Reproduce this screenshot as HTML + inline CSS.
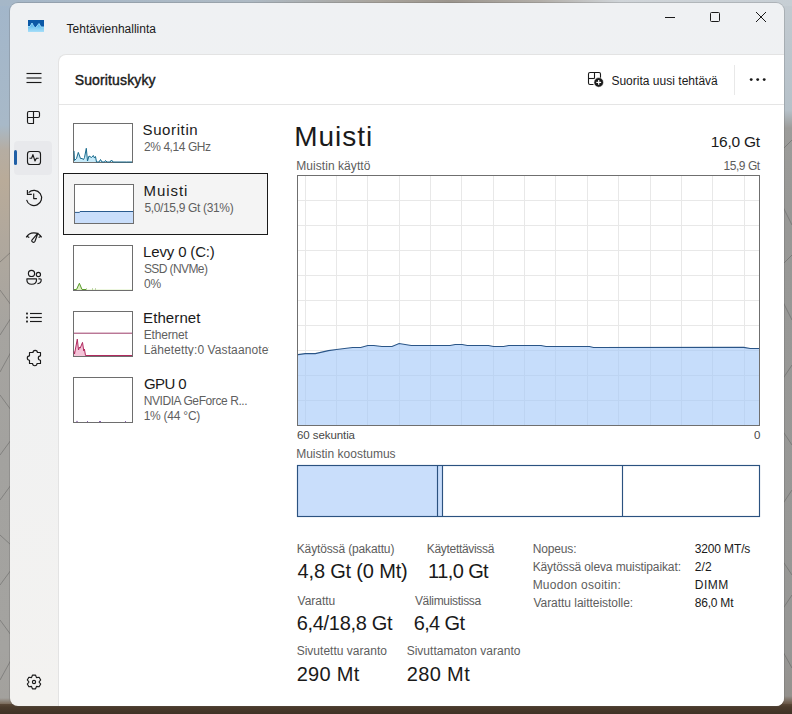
<!DOCTYPE html>
<html><head><meta charset="utf-8">
<style>
*{margin:0;padding:0;box-sizing:border-box}
html,body{width:792px;height:714px;overflow:hidden}
body{position:relative;font-family:"Liberation Sans",sans-serif;color:#1a1a1a;background-color:#9a9a98}
#bgL{position:absolute;left:0;top:0;width:12px;height:714px;background:linear-gradient(180deg,#a2b6ca 0px,#a8b9c8 125px,#b5ada2 150px,#b9ab99 180px,#b0a89d 240px,#a6a4a0 330px,#a3a29f 450px,#a4a3a0 650px,#a3a19d 698px,#7a6a5a 704px,#4a3a2c 708px,#3f3125 714px)}
#bgR{position:absolute;left:780px;top:0;width:12px;height:714px;background:linear-gradient(180deg,#c3cbd1 0px,#b6c1c9 110px,#9c9c9a 128px,#989896 200px,#979795 650px,#94918d 696px,#6e5c4c 703px,#4a3a2c 708px,#3f3125 714px)}
#bgT{position:absolute;left:0;top:0;width:792px;height:6px;background:linear-gradient(90deg,#a5b7c8 0px,#aebac4 250px,#a9a49c 380px,#9c968e 450px,#b2aea8 540px,#d0d5d9 620px,#c6ced4 792px)}
#bgB{position:absolute;left:0;top:704px;width:792px;height:10px;background:linear-gradient(180deg,#5a4838 0px,#4b3b2c 3px,#3f3125 10px)}
.a{position:absolute;white-space:nowrap;line-height:1}
#win{position:absolute;left:10.3px;top:3px;width:773.7px;height:702.6px;border-radius:8px;overflow:hidden;
background:linear-gradient(180deg,#eff1f3 0%,#f0f1f2 40%,#f3f2f0 100%);box-shadow:0 0 0 1px rgba(80,80,80,0.22)}
#content{position:absolute;left:58px;top:54px;width:726px;height:651.6px;background:#fff;border-top-left-radius:8px;border-bottom-right-radius:8px;border-left:1px solid #e3e3e3;border-top:1px solid #e3e3e3}
.ttl{font-size:14px;color:#1a1a1a}
.sub{font-size:11px;color:#5f5f5f}
.lbl{font-size:11px;color:#5d5d5d}
.val{font-size:18px;color:#1a1a1a}
.mini{position:absolute;border:1px solid #6e6e6e;background:#fff}
</style></head><body>
<div id="bgL"></div><div id="bgR"></div><div id="bgT"></div><div id="bgB"></div>
<svg class="a" style="left:0;top:0" width="792" height="714" viewBox="0 0 792 714"><g stroke="rgba(70,70,70,0.35)" stroke-width="1" fill="none"><line x1="0" y1="262" x2="11" y2="252"/><line x1="0" y1="290" x2="11" y2="305"/><line x1="0" y1="335" x2="11" y2="318"/><line x1="0" y1="372" x2="11" y2="352"/><line x1="0" y1="395" x2="11" y2="410"/><line x1="0" y1="455" x2="11" y2="440"/><line x1="0" y1="500" x2="11" y2="485"/><line x1="0" y1="535" x2="11" y2="545"/><line x1="0" y1="585" x2="11" y2="570"/><line x1="0" y1="620" x2="11" y2="635"/><line x1="0" y1="680" x2="11" y2="660"/><line x1="782" y1="150" x2="792" y2="140"/><line x1="782" y1="205" x2="792" y2="225"/><line x1="782" y1="265" x2="792" y2="255"/><line x1="782" y1="300" x2="792" y2="320"/><line x1="782" y1="380" x2="792" y2="365"/><line x1="782" y1="430" x2="792" y2="445"/><line x1="782" y1="505" x2="792" y2="490"/><line x1="782" y1="560" x2="792" y2="575"/><line x1="782" y1="610" x2="792" y2="595"/><line x1="782" y1="650" x2="792" y2="668"/></g></svg>
<div id="win"></div>
<div id="content"></div>

<!-- app icon -->
<svg class="a" style="left:28px;top:20px" width="16" height="12" viewBox="0 0 16 12">
  <defs><linearGradient id="ig" x1="0" y1="0" x2="0" y2="1"><stop offset="0" stop-color="#3a9de0"/><stop offset="0.55" stop-color="#7ccbf3"/><stop offset="1" stop-color="#a8def8"/></linearGradient></defs>
  <rect x="0" y="0" width="16" height="12" fill="#0a58a6"/>
  <polygon points="0,6.5 2,6.5 4,3 5.5,6 7.5,8 9,6 11,3.5 13,7 16,7 16,12 0,12" fill="url(#ig)"/>
  <polyline points="0,6.5 2,6.5 4,3 5.5,6 7.5,8 9,6 11,3.5 13,7 16,7" fill="none" stroke="#9ee0ff" stroke-width="0.9"/>
</svg>
<!-- window controls -->
<svg class="a" style="left:660px;top:8px" width="120" height="20" viewBox="0 0 120 20">
  <line x1="5" y1="9.5" x2="15" y2="9.5" stroke="#1a1a1a" stroke-width="1"/>
  <rect x="50.5" y="4.5" width="9" height="9" rx="1" fill="none" stroke="#1a1a1a" stroke-width="1"/>
  <line x1="96" y1="4" x2="106" y2="14" stroke="#1a1a1a" stroke-width="1"/>
  <line x1="106" y1="4" x2="96" y2="14" stroke="#1a1a1a" stroke-width="1"/>
</svg>

<!-- sidebar -->
<div class="a" style="left:14px;top:141px;width:38px;height:34px;border-radius:4px;background:#e8e9ec"></div>
<div class="a" style="left:14px;top:150px;width:3px;height:15px;border-radius:2px;background:#1f5fa6"></div>
<svg class="a" style="left:0;top:0" width="60" height="714" viewBox="0 0 60 714" fill="none" stroke="#1a1a1a" stroke-width="1.15" stroke-linejoin="round">
  <!-- hamburger -->
  <line x1="26.5" y1="73.5" x2="41.5" y2="73.5"/>
  <line x1="26.5" y1="78" x2="41.5" y2="78"/>
  <line x1="26.5" y1="82.5" x2="41.5" y2="82.5"/>
  <!-- apps -->
  <path d="M27.5 117.5 h6 v6 h-4.5 a1.5 1.5 0 0 1 -1.5 -1.5 z M27.5 117.5 v-4.5 a1.5 1.5 0 0 1 1.5 -1.5 h4.5 v6 M33.5 111.5 h4.5 a1.5 1.5 0 0 1 1.5 1.5 v3 a1.5 1.5 0 0 1 -1.5 1.5 h-4.5"/>
  <!-- performance -->
  <rect x="27.5" y="151.5" width="13" height="13" rx="2.5"/>
  <polyline points="29.4,158.2 31.6,158.2 32.9,154.6 35,161 36.4,158.2 38.7,158.2"/>
  <!-- history -->
  <path d="M26.6 199.8 A7.6 7.6 0 1 0 28.6 192.6"/>
  <polyline points="27.4,190 27.4,194.4 31.8,194.4"/>
  <polyline points="33.7,193.5 33.7,198.6 36.9,198.6"/>
  <!-- startup gauge -->
  <path d="M26.2 237.4 A8.8 8.8 0 0 1 41.6 237.4"/>
  <line x1="26.8" y1="236.2" x2="29.3" y2="237.6"/>
  <line x1="41" y1="236.2" x2="38.6" y2="237.4"/>
  <path d="M37.9 233.2 L35 241.3 A1.75 1.75 0 0 1 31.7 240.3 Z"/>
  <!-- users -->
  <circle cx="31.5" cy="273.4" r="3.1"/>
  <circle cx="38.4" cy="274.5" r="2.1"/>
  <path d="M26.9 278.8 H36.5 V280 C36.5 282.8 34.2 284.2 31.7 284.2 C29.2 284.2 26.9 282.8 26.9 280 Z"/>
  <path d="M38.4 278.8 H40 A1.2 1.2 0 0 1 41.2 280 C41.2 282 39.6 283.5 37.4 283.7"/>
  <!-- details list -->
  <line x1="30" y1="313.5" x2="41.8" y2="313.5"/>
  <line x1="30" y1="317.5" x2="41.8" y2="317.5"/>
  <line x1="30" y1="321.5" x2="41.8" y2="321.5"/>
  <!-- services puzzle -->
  <path d="M29.5 352.5 H33 A2.2 2.2 0 0 1 37.4 352.5 H40.5 V355.8 A2.2 2.2 0 0 0 40.5 360.2 V363.5 H37 A2.2 2.2 0 0 1 32.6 363.5 H29.5 V360.2 A2.2 2.2 0 0 1 29.5 355.8 Z"/>
  <!-- settings gear -->
  <path d="M31.50 677.67 L32.43 675.18 L35.57 675.18 L36.50 677.67 L39.12 677.23 L40.69 679.95 L39.00 682.00 L40.69 684.05 L39.12 686.77 L36.50 686.33 L35.57 688.82 L32.43 688.82 L31.50 686.33 L28.88 686.77 L27.31 684.05 L29.00 682.00 L27.31 679.95 L28.88 677.23 Z"/>
  <circle cx="34" cy="682" r="1.6"/>
</svg>
<svg class="a" style="left:25px;top:311px" width="4" height="14"><rect x="1.1" y="1.6" width="1.8" height="1.8" rx="0.5" fill="#1a1a1a"/><rect x="1.1" y="5.6" width="1.8" height="1.8" rx="0.5" fill="#1a1a1a"/><rect x="1.1" y="9.6" width="1.8" height="1.8" rx="0.5" fill="#1a1a1a"/></svg>

<!-- header -->
<div class="a" style="left:59px;top:104px;width:725px;height:1px;background:#e5e5e5"></div>
<svg class="a" style="left:586px;top:70px" width="20" height="20" viewBox="0 0 20 20" fill="none" stroke="#1a1a1a" stroke-width="1.1">
  <path d="M7.5 14.5 H4 A1.5 1.5 0 0 1 2.5 13 V4 A1.5 1.5 0 0 1 4 2.5 H13 A1.5 1.5 0 0 1 14.5 4 V8"/>
  <line x1="2.5" y1="8.5" x2="8.5" y2="8.5"/><line x1="8.5" y1="2.5" x2="8.5" y2="8.5"/>
  <circle cx="12.7" cy="12.4" r="4.8" fill="#1a1a1a" stroke="#fff" stroke-width="0.6"/>
  <line x1="12.7" y1="10" x2="12.7" y2="14.8" stroke="#fff" stroke-width="1.2"/>
  <line x1="10.3" y1="12.4" x2="15.1" y2="12.4" stroke="#fff" stroke-width="1.2"/>
</svg>
<div class="a" style="left:733.5px;top:65px;width:1px;height:30px;background:#e8e8e8"></div>
<svg class="a" style="left:748px;top:77px" width="20" height="6"><circle cx="3.2" cy="2.6" r="1.45" fill="#1a1a1a"/><circle cx="9.7" cy="2.6" r="1.45" fill="#1a1a1a"/><circle cx="16.2" cy="2.6" r="1.45" fill="#1a1a1a"/></svg>

<!-- list -->
<div class="a" style="left:63px;top:173px;width:204.5px;height:62px;background:#f4f4f4;border:1.6px solid #1a1a1a"></div>

<div class="mini" style="left:73px;top:123px;width:60px;height:40px"></div>
<svg class="a" style="left:73px;top:123px" width="60" height="40" viewBox="0 0 60 40">
  <polygon points="1,27.9 1.5,37.5 3.5,35.5 5.3,29.4 7.5,35.5 9,35.5 10.5,36.5 11.5,34.5 13.3,25.3 14.5,38 16,33 18.5,34.5 20.3,32.5 21.5,35 22.5,33.5 23.5,39 26,39 27.5,36.5 29,39 31.5,39 32.5,37.5 34,39 37,39 38.5,37 40,39 53.5,39 59,39 59,39 1,39" fill="#c6eaf9" stroke="none"/>
  <polyline points="1,27.9 1.5,37.5 3.5,35.5 5.3,29.4 7.5,35.5 9,35.5 10.5,36.5 11.5,34.5 13.3,25.3 14.5,38 16,33 18.5,34.5 20.3,32.5 21.5,35 22.5,33.5 23.5,39 26,39 27.5,36.5 29,39 31.5,39 32.5,37.5 34,39 37,39 38.5,37 40,39 53.5,39 59,39" fill="none" stroke="#17698c" stroke-width="1"/>
</svg>
<div class="mini" style="left:74px;top:184px;width:60px;height:40px"></div>
<svg class="a" style="left:74px;top:184px" width="60" height="40" viewBox="0 0 60 40">
  <polygon points="1,28.4 5.5,28.4 6,27.5 59,27.5 59,39 1,39" fill="#c9defb" stroke="none"/>
  <polyline points="1,28.4 5.5,28.4 6,27.5 59,27.5" fill="none" stroke="#2a5b8f" stroke-width="1"/>
</svg>
<div class="mini" style="left:73px;top:245px;width:60px;height:46px"></div>
<svg class="a" style="left:73px;top:245px" width="60" height="46" viewBox="0 0 60 46">
  <polygon points="1,44.5 3.5,44.5 6.4,38.3 9,44.5 59,44.5 59,45 1,45" fill="#dcefc0" stroke="none"/>
  <polyline points="1,44.5 3.5,44.5 6.4,38.3 9,44.5 13,44.5" fill="none" stroke="#5a9a2c" stroke-width="1"/>
  <rect x="13" y="43.5" width="1" height="1" fill="#8ab060"/><rect x="19" y="43.5" width="1" height="1" fill="#8ab060"/><rect x="22" y="43.5" width="1" height="1" fill="#8ab060"/>
</svg>
<div class="mini" style="left:73px;top:311px;width:60px;height:46px"></div>
<svg class="a" style="left:73px;top:311px" width="60" height="46" viewBox="0 0 60 46">
  <line x1="1" y1="22.2" x2="59" y2="22.2" stroke="#9b3a68" stroke-width="1"/>
  <polygon points="1,40.4 1.5,43 4.3,28.1 5.5,39 6.5,36 7.2,37.1 9.5,31.4 10.8,40 11.4,38 12.5,44.5 59,44.5 59,45 1,45" fill="#f4c3d8" stroke="none"/>
  <polyline points="1,40.4 1.5,43 4.3,28.1 5.5,39 6.5,36 7.2,37.1 9.5,31.4 10.8,40 11.4,38 12.5,44.5 59,44.5" fill="none" stroke="#b12a5f" stroke-width="1"/>
</svg>
<div class="mini" style="left:73px;top:377px;width:60px;height:46px"></div>
<svg class="a" style="left:73px;top:377px" width="60" height="46" viewBox="0 0 60 46">
  <polygon points="3,45 4,43.5 5,45" fill="#8a62b0"/>
  <rect x="14" y="44" width="1" height="1" fill="#8a62b0"/><rect x="26" y="44" width="2" height="1" fill="#8a62b0"/><rect x="52" y="44" width="1" height="1" fill="#8a62b0"/>
</svg>

<!-- main -->

<svg class="a" style="left:297px;top:175px" width="464" height="252" viewBox="0 0 464 252">
  <g stroke="#e8e8e8" stroke-width="1"><line x1="8.5" y1="0" x2="8.5" y2="250"/><line x1="39.5" y1="0" x2="39.5" y2="250"/><line x1="70.5" y1="0" x2="70.5" y2="250"/><line x1="102.5" y1="0" x2="102.5" y2="250"/><line x1="133.5" y1="0" x2="133.5" y2="250"/><line x1="164.5" y1="0" x2="164.5" y2="250"/><line x1="196.5" y1="0" x2="196.5" y2="250"/><line x1="227.5" y1="0" x2="227.5" y2="250"/><line x1="258.5" y1="0" x2="258.5" y2="250"/><line x1="290.5" y1="0" x2="290.5" y2="250"/><line x1="321.5" y1="0" x2="321.5" y2="250"/><line x1="353.5" y1="0" x2="353.5" y2="250"/><line x1="384.5" y1="0" x2="384.5" y2="250"/><line x1="415.5" y1="0" x2="415.5" y2="250"/><line x1="447.5" y1="0" x2="447.5" y2="250"/><line x1="0" y1="25.5" x2="462" y2="25.5"/><line x1="0" y1="50.5" x2="462" y2="50.5"/><line x1="0" y1="75.5" x2="462" y2="75.5"/><line x1="0" y1="100.5" x2="462" y2="100.5"/><line x1="0" y1="125.5" x2="462" y2="125.5"/><line x1="0" y1="150.5" x2="462" y2="150.5"/><line x1="0" y1="175.5" x2="462" y2="175.5"/><line x1="0" y1="200.5" x2="462" y2="200.5"/><line x1="0" y1="225.5" x2="462" y2="225.5"/></g>
  <polygon fill="rgba(160,198,248,0.6)" stroke="none" points="1,179.6 8.2,178.6 18.3,178.6 31.4,175.6 39.5,174.5 55.6,172.5 63.7,172.5 70.8,170.5 76.8,170.5 84.9,171.5 95.0,171.5 102.1,168.5 114.2,170.5 153.1,170.5 158.2,169.5 165.2,169.5 170.3,170.5 191.5,170.5 196.5,171.5 206.6,171.5 211.7,170.5 244.0,170.5 249.0,171.5 292.5,171.5 296.5,172.5 446.8,172.4 453.2,173.5 462.0,173.5 462,250.5 1,250.5"/>
  <polyline fill="none" stroke="#2a5587" stroke-width="1.1" points="1,179.6 8.2,178.6 18.3,178.6 31.4,175.6 39.5,174.5 55.6,172.5 63.7,172.5 70.8,170.5 76.8,170.5 84.9,171.5 95.0,171.5 102.1,168.5 114.2,170.5 153.1,170.5 158.2,169.5 165.2,169.5 170.3,170.5 191.5,170.5 196.5,171.5 206.6,171.5 211.7,170.5 244.0,170.5 249.0,171.5 292.5,171.5 296.5,172.5 446.8,172.4 453.2,173.5 462.0,173.5"/>
  <rect x="0.5" y="0.5" width="462" height="250" fill="none" stroke="#6f6f6f" stroke-width="1"/>
</svg>

<svg class="a" style="left:296px;top:464px" width="466" height="54" viewBox="0 0 466 54">
  <rect x="1" y="1" width="145.5" height="52" fill="#c9defb"/>
  <g stroke="#2b5280" stroke-width="1.15" fill="none">
    <rect x="1.5" y="1.5" width="462" height="51"/>
    <line x1="141.5" y1="1.5" x2="141.5" y2="52.5"/>
    <line x1="146.5" y1="1.5" x2="146.5" y2="52.5"/>
    <line x1="326.5" y1="1.5" x2="326.5" y2="52.5"/>
  </g>
</svg>


<div class="a" style="left:66.56px;top:22.94px;font-size:12px;color:#1a1a1a">Tehtävienhallinta</div>
<div class="a" style="left:74.66px;top:73.45px;font-size:14px;color:#1a1a1a;letter-spacing:0.144px;-webkit-text-stroke:0.4px #1a1a1a">Suorituskyky</div>
<div class="a" style="left:611.38px;top:74.54px;font-size:12px;color:#1a1a1a;letter-spacing:0.017px">Suorita uusi tehtävä</div>
<div class="a" style="left:142.52px;top:122.00px;font-size:15px;color:#1a1a1a;letter-spacing:0.617px">Suoritin</div>
<div class="a" style="left:144.00px;top:140.64px;font-size:12px;color:#5f5f5f;letter-spacing:-0.432px">2% 4,14 GHz</div>
<div class="a" style="left:143.58px;top:183.20px;font-size:15px;color:#1a1a1a;letter-spacing:0.928px">Muisti</div>
<div class="a" style="left:144.38px;top:201.64px;font-size:12px;color:#5f5f5f;letter-spacing:-0.340px">5,0/15,9 Gt (31%)</div>
<div class="a" style="left:143.08px;top:244.00px;font-size:15px;color:#1a1a1a;letter-spacing:-0.160px">Levy 0 (C:)</div>
<div class="a" style="left:143.88px;top:263.14px;font-size:12px;color:#5f5f5f;letter-spacing:-0.587px">SSD (NVMe)</div>
<div class="a" style="left:143.88px;top:278.34px;font-size:12px;color:#5f5f5f">0%</div>
<div class="a" style="left:143.08px;top:310.00px;font-size:15px;color:#1a1a1a;letter-spacing:0.091px">Ethernet</div>
<div class="a" style="left:143.68px;top:329.24px;font-size:12px;color:#5f5f5f;letter-spacing:-0.183px">Ethernet</div>
<div class="a" style="left:143.68px;top:344.44px;font-size:12px;color:#5f5f5f;letter-spacing:0.100px;width:125.82px;overflow:hidden">Lähetetty:0 Vastaanotet</div>
<div class="a" style="left:143.88px;top:375.90px;font-size:15px;color:#1a1a1a;letter-spacing:-0.560px">GPU 0</div>
<div class="a" style="left:143.64px;top:395.14px;font-size:12px;color:#5f5f5f;letter-spacing:-0.409px">NVIDIA GeForce R...</div>
<div class="a" style="left:143.64px;top:410.34px;font-size:12px;color:#5f5f5f;letter-spacing:-0.231px">1% (44 °C)</div>
<div class="a" style="left:294.16px;top:122.90px;font-size:28px;color:#1a1a1a;letter-spacing:0.992px">Muisti</div>
<div class="a" style="left:710.64px;top:133.78px;font-size:15.5px;color:#1a1a1a;letter-spacing:-0.240px">16,0 Gt</div>
<div class="a" style="left:296.20px;top:159.84px;font-size:12px;color:#5d5d5d;letter-spacing:0.062px">Muistin käyttö</div>
<div class="a" style="left:723.52px;top:159.74px;font-size:12px;color:#5d5d5d;letter-spacing:-0.453px">15,9 Gt</div>
<div class="a" style="left:297.00px;top:429.87px;font-size:11.5px;color:#474747;letter-spacing:-0.080px">60 sekuntia</div>
<div class="a" style="left:753.94px;top:429.97px;font-size:11.5px;color:#474747">0</div>
<div class="a" style="left:296.20px;top:447.74px;font-size:12px;color:#5d5d5d">Muistin koostumus</div>
<div class="a" style="left:296.76px;top:543.24px;font-size:12px;color:#5d5d5d;letter-spacing:-0.141px">Käytössä (pakattu)</div>
<div class="a" style="left:297.56px;top:561.17px;font-size:20px;color:#1a1a1a;letter-spacing:-0.173px">4,8 Gt (0 Mt)</div>
<div class="a" style="left:426.76px;top:543.24px;font-size:12px;color:#5d5d5d;letter-spacing:-0.307px">Käytettävissä</div>
<div class="a" style="left:428.08px;top:561.17px;font-size:20px;color:#1a1a1a;letter-spacing:-0.587px">11,0 Gt</div>
<div class="a" style="left:297.56px;top:594.54px;font-size:12px;color:#5d5d5d;letter-spacing:-0.027px">Varattu</div>
<div class="a" style="left:296.76px;top:612.67px;font-size:20px;color:#1a1a1a;letter-spacing:-0.320px">6,4/18,8 Gt</div>
<div class="a" style="left:414.88px;top:594.54px;font-size:12px;color:#5d5d5d;letter-spacing:-0.307px">Välimuistissa</div>
<div class="a" style="left:413.64px;top:612.67px;font-size:20px;color:#1a1a1a;letter-spacing:-0.608px">6,4 Gt</div>
<div class="a" style="left:296.64px;top:644.84px;font-size:12px;color:#5d5d5d;letter-spacing:0.020px">Sivutettu varanto</div>
<div class="a" style="left:296.64px;top:663.87px;font-size:20px;color:#1a1a1a;letter-spacing:0.288px">290 Mt</div>
<div class="a" style="left:406.64px;top:644.84px;font-size:12px;color:#5d5d5d;letter-spacing:0.025px">Sivuttamaton varanto</div>
<div class="a" style="left:406.64px;top:663.87px;font-size:20px;color:#1a1a1a;letter-spacing:0.384px">280 Mt</div>
<div class="a" style="left:532.64px;top:543.04px;font-size:12px;color:#5d5d5d;letter-spacing:-0.133px">Nopeus:</div>
<div class="a" style="left:532.64px;top:560.84px;font-size:12px;color:#5d5d5d;letter-spacing:-0.113px">Käytössä oleva muistipaikat:</div>
<div class="a" style="left:532.64px;top:578.84px;font-size:12px;color:#5d5d5d;letter-spacing:0.251px">Muodon osoitin:</div>
<div class="a" style="left:533.44px;top:596.84px;font-size:12px;color:#5d5d5d;letter-spacing:-0.038px">Varattu laitteistolle:</div>
<div class="a" style="left:694.76px;top:543.34px;font-size:12px;color:#1a1a1a;letter-spacing:-0.140px">3200 MT/s</div>
<div class="a" style="left:694.76px;top:561.34px;font-size:12px;color:#1a1a1a;letter-spacing:0.160px">2/2</div>
<div class="a" style="left:694.76px;top:579.34px;font-size:12px;color:#1a1a1a;letter-spacing:0.480px">DIMM</div>
<div class="a" style="left:694.76px;top:597.34px;font-size:12px;color:#1a1a1a;letter-spacing:-0.213px">86,0 Mt</div>
</body></html>
